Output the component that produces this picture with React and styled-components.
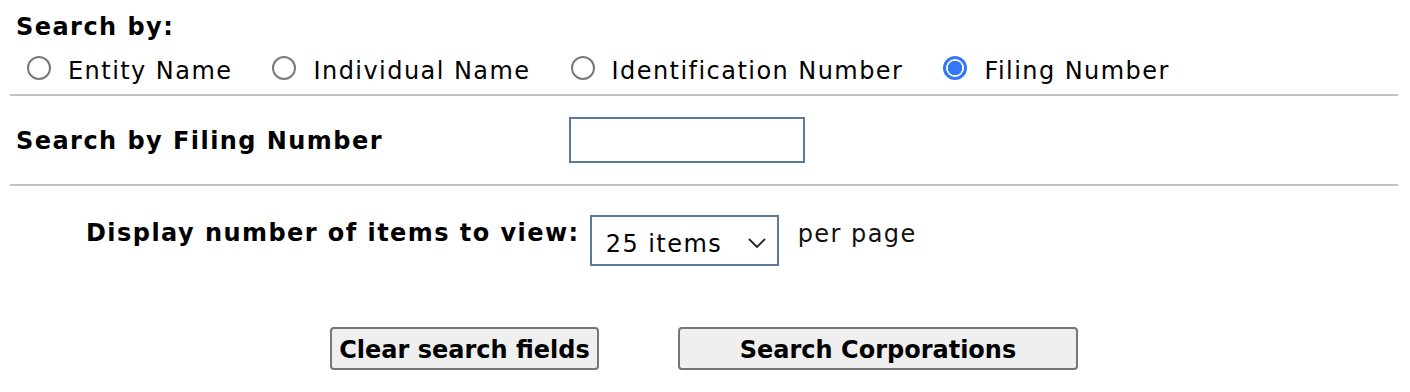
import React, { useState } from "react";
import styled, { createGlobalStyle } from "styled-components";

const Global = createGlobalStyle`
  html, body { margin: 0; padding: 0; background: #fff; }
  body { font-family: "DejaVu Sans", Verdana, sans-serif; color: #000; }
`;

const Page = styled.div`
  width: 1388px;
  padding: 10px 0 0 10px;
  font-size: 24px;
  letter-spacing: 1.45px;
`;

const Heading = styled.div`
  font-weight: bold;
  line-height: 30px;
  margin-left: 6px;
  padding-top: 2px;
`;

const RadioRow = styled.div`
  display: flex;
  align-items: center;
  gap: 40px;
  height: 48px;
  padding: 4px 0 0 17px;
`;

const RadioLabel = styled.label`
  display: flex;
  align-items: center;
  gap: 17px;
  cursor: pointer;
  line-height: 30px;
  padding-top: 2px;
`;

const RadioInput = styled.input.attrs({ type: "radio" })`
  appearance: none;
  margin: 0;
  width: 24px;
  height: 24px;
  border-radius: 50%;
  border: 2px solid #7a7a7a;
  background: #fff;
  box-sizing: border-box;
  position: relative;
  top: -3px;
  &:checked {
    border: 3px solid #3478f6;
    background: radial-gradient(circle, #3478f6 0 7px, #fff 7.5px);
  }
`;

const Rule = styled.hr`
  margin: 0;
  border: 0;
  height: 2px;
  background: #c0c0c0;
`;

const FieldRow = styled.div`
  display: grid;
  grid-template-columns: 559px auto;
  align-items: center;
  height: 88px;
`;

const FieldLabel = styled.div`
  font-weight: bold;
  padding: 2px 0 0 6px;
`;

const TextInput = styled.input`
  width: 236px;
  height: 46px;
  box-sizing: border-box;
  border: 2px solid #5a7a9e;
  margin: 0;
  padding: 0 8px;
  font: inherit;
`;

const DisplayRow = styled.div`
  display: flex;
  align-items: flex-start;
  padding-left: 76px;
  margin-top: 29px;
  height: 112px;
`;

const DisplayLabel = styled.div`
  font-weight: bold;
  line-height: 30px;
  padding-top: 3px;
  margin-right: 10px;
`;

const SelectBox = styled.div`
  position: relative;
  width: 189px;
  height: 51px;
  box-sizing: border-box;
  border: 2px solid #5a7a9e;
  display: flex;
  align-items: center;
  padding: 6px 0 0 14px;
`;

const Select = styled.select`
  appearance: none;
  border: 0;
  background: transparent;
  font: inherit;
  letter-spacing: inherit;
  width: 100%;
  padding: 0;
  outline: none;
`;

const Chevron = styled.svg`
  position: absolute;
  right: 10px;
  top: 20px;
  pointer-events: none;
`;

const PerPage = styled.div`
  line-height: 30px;
  padding-top: 4px;
  margin-left: 19px;
  color: #111;
`;

const ButtonRow = styled.div`
  display: flex;
  gap: 79px;
  padding-left: 320px;
`;

const Button = styled.button`
  height: 43px;
  width: ${(p) => p.$w}px;
  box-sizing: border-box;
  border: 2px solid #767676;
  border-radius: 4px;
  background: #efefef;
  font: inherit;
  font-weight: bold;
  letter-spacing: 0;
  padding: 3px 0 0;
  color: #000;
`;

export default function App() {
  const [mode, setMode] = useState("filing");
  const opts = [
    ["entity", "Entity Name"],
    ["individual", "Individual Name"],
    ["id", "Identification Number"],
    ["filing", "Filing Number"],
  ];
  return (
    <Page>
      <Global />
      <Heading>Search by:</Heading>
      <RadioRow>
        {opts.map(([k, t]) => (
          <RadioLabel key={k}>
            <RadioInput name="mode" checked={mode === k} onChange={() => setMode(k)} />
            {t}
          </RadioLabel>
        ))}
      </RadioRow>
      <Rule />
      <FieldRow>
        <FieldLabel>Search by Filing Number</FieldLabel>
        <TextInput type="text" />
      </FieldRow>
      <Rule />
      <DisplayRow>
        <DisplayLabel>Display number of items to view:</DisplayLabel>
        <SelectBox>
          <Select defaultValue="25">
            <option value="25">25 items</option>
            <option value="50">50 items</option>
          </Select>
          <Chevron width="20" height="12" viewBox="0 0 20 12">
            <path d="M2 2 L10 10 L18 2" fill="none" stroke="#222" strokeWidth="1.8" />
          </Chevron>
        </SelectBox>
        <PerPage>per page</PerPage>
      </DisplayRow>
      <ButtonRow>
        <Button $w={269}>Clear search fields</Button>
        <Button $w={400}>Search Corporations</Button>
      </ButtonRow>
    </Page>
  );
}
